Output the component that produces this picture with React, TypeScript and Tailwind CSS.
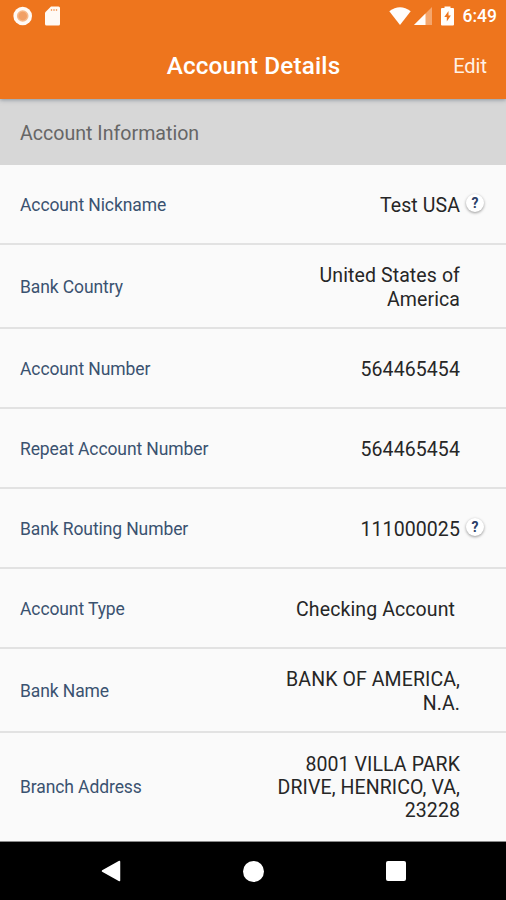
type Row = {
  label: string;
  lines: string[];
  height: string;
  help?: boolean;
  select?: boolean;
};

const rows: Row[] = [
  { label: 'Account Nickname', lines: ['Test USA'], height: 'h-[80px]', help: true },
  { label: 'Bank Country', lines: ['United States of', 'America'], height: 'h-[84px]' },
  { label: 'Account Number', lines: ['564465454'], height: 'h-[80px]' },
  { label: 'Repeat Account Number', lines: ['564465454'], height: 'h-[80px]' },
  { label: 'Bank Routing Number', lines: ['111000025'], height: 'h-[80px]', help: true },
  { label: 'Account Type', lines: ['Checking Account'], height: 'h-[80px]', select: true },
  { label: 'Bank Name', lines: ['BANK OF AMERICA,', 'N.A.'], height: 'h-[84px]' },
  {
    label: 'Branch Address',
    lines: ['8001 VILLA PARK', 'DRIVE, HENRICO, VA,', '23228'],
    height: 'h-[108px]',
  },
];

function StatusBar() {
  return (
    <div className="flex h-8 items-center justify-between pl-[13px] pr-[9px]">
      <div className="flex items-center gap-[12px] pb-px">
        <svg width="20" height="20" viewBox="0 0 20 20">
          <circle cx="9.700" cy="10" r="9.300" fill="#fffaf5" />
          <circle cx="9.700" cy="10" r="5.800" fill="#f6b98a" />
          <circle cx="9.700" cy="10" r="4.300" fill="#f1a066" />
        </svg>
        <svg width="16" height="20" viewBox="0 0 16 20">
          <path d="M6 0.500h7.500q1.500 0 1.500 1.500v16q0 1.500-1.500 1.500H1.500Q0 19.500 0 18V6.500z" fill="#fffaf5" />
          <path d="M6.500 3v2M9 3v2M11.500 3v2" stroke="#ee751d" strokeWidth="1.300" opacity=".6" />
        </svg>
      </div>
      <div className="flex items-center">
        <svg width="22" height="18" viewBox="0 0 22 18">
          <path d="M.3 4.200Q11-3.600 21.700 4.200L11 18z" fill="#fffdfb" />
        </svg>
        <svg className="ml-[3px]" width="18" height="18" viewBox="0 0 18 18">
          <path d="M18 0v18H0z" fill="#f5a66c" />
          <path d="M11.500 6.500V18H0z" fill="#fffdfb" />
        </svg>
        <svg className="mb-px ml-[9px]" width="13" height="20" viewBox="0 0 13 20">
          <path d="M3.500 2V.5h6V2H12q1 0 1 1v15.500q0 1-1 1H1q-1 0-1-1V3q0-1 1-1z" fill="#fffdfb" />
          <path d="M7.500 5L3.300 11h2.500v4.500L9.900 9.500H7.500z" fill="#ee751d" />
        </svg>
        <span className="ml-[9px] text-[17.500px] font-medium leading-8 text-white">6:49</span>
      </div>
    </div>
  );
}

function HelpBadge() {
  return (
    <span className="flex size-[18px] items-center justify-center rounded-full bg-white text-[14px] font-bold leading-none text-[#2b4068] shadow-[0_1px_3px_rgba(0,0,0,0.4)]">
      ?
    </span>
  );
}

function DetailRow({ row }: { row: Row }) {
  return (
    <div className={`${row.height} flex items-center justify-between border-b-2 border-[#e2e2e2] pl-5 pr-[21px] pt-[3px] last:border-b-0 last:pt-px`}>
      <span className="pb-px text-[17.500px] leading-6 tracking-[-0.1px] text-[#3a5270]">{row.label}</span>
      <div className="flex items-center">
        <div className={`text-right text-[19.500px] leading-[23.300px] tracking-[0.1px] text-[#262626] ${row.select ? 'mr-[5px]' : ''}`}>
          {row.lines.map((line) => (
            <div key={line} className="whitespace-nowrap">{line}</div>
          ))}
        </div>
        <div className="flex w-[25px] justify-end pb-1 pr-px">{row.help && <HelpBadge />}</div>
      </div>
    </div>
  );
}

export default function App() {
  return (
    <div className="flex h-[900px] w-[506px] flex-col overflow-hidden bg-[#fafafa] font-['Roboto',sans-serif]">
      <header className="relative h-[99px] shrink-0 bg-[#ee751d] text-white shadow-[0_1px_4px_rgba(60,80,100,0.5)]">
        <StatusBar />
        <div className="grid h-[67px] grid-cols-[1fr_auto_1fr] items-center pr-[19px]">
          <span />
          <h1 className="pl-[20px] text-[24.300px] font-medium leading-7 tracking-[0.15px]">Account Details</h1>
          <button className="justify-self-end text-[20px] leading-7 text-[#fff1e6]">Edit</button>
        </div>
      </header>
      <h2 className="flex h-[66px] shrink-0 items-center bg-[#d7d7d7] pl-5 pt-[3px] text-[19.600px] text-[#666]">
        Account Information
      </h2>
      <main className="flex h-[676px] shrink-0 flex-col">
        {rows.map((row) => (
          <DetailRow key={row.label} row={row} />
        ))}
      </main>
      <nav className="grow border-t border-[#8a8a8a] bg-black">
        <div className="flex h-[58px] items-center justify-between pl-[101px] pr-[100px]">
          <svg width="20" height="22" viewBox="0 0 20 22">
            <path d="M18.500 1.500v19L1.500 11z" fill="white" stroke="white" strokeWidth="1.500" strokeLinejoin="round" />
          </svg>
          <span className="size-[21px] rounded-full bg-white" />
          <span className="size-5 rounded-[2px] bg-white" />
        </div>
      </nav>
    </div>
  );
}
